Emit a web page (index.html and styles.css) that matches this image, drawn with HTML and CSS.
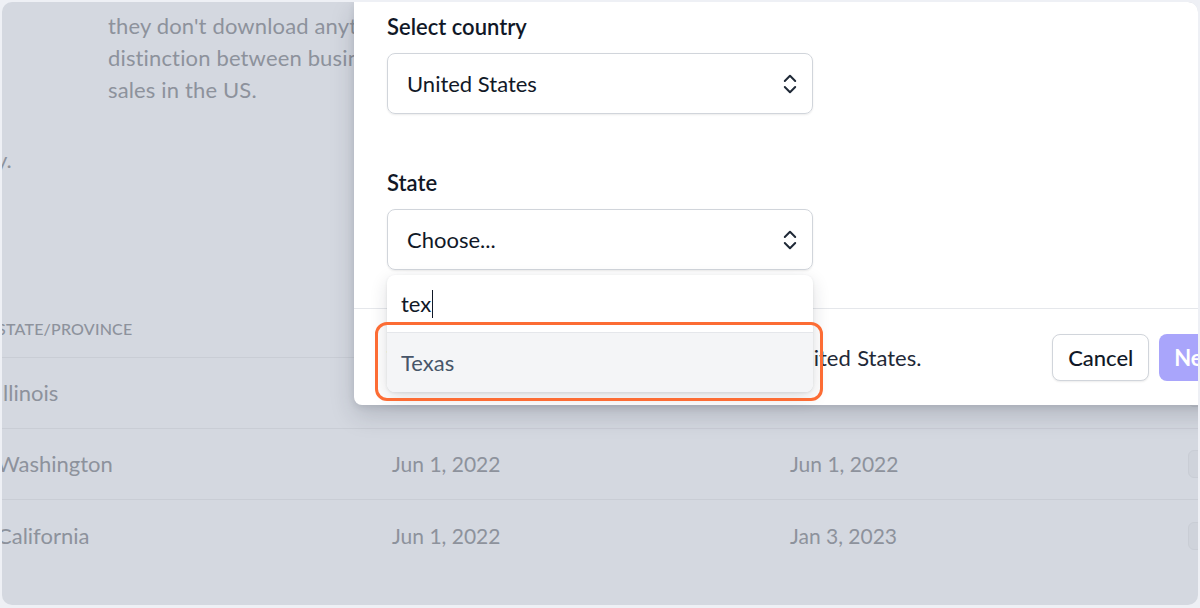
FILE: index.html
```html
<!DOCTYPE html>
<html lang="en">
<head>
<meta charset="utf-8">
<title>Select state</title>
<link rel="stylesheet" href="styles.css">
</head>
<body>
<div class="frame">
  <div class="page">
    <p class="intro">they don't download anything, so there is no<br>distinction between business and personal<br>sales in the US.</p>
    <p class="note">y.</p>
    <div class="table">
      <div class="row head">
        <div class="cell">State/Province</div>
        <div class="cell">Registered</div>
        <div class="cell">Effective</div>
        <div class="cell"></div>
      </div>
      <div class="row">
        <div class="cell">Illinois</div>
        <div class="cell date">Jun 1, 2022</div>
        <div class="cell date">Jun 1, 2022</div>
        <div class="cell"><span class="rowbtn"></span></div>
      </div>
      <div class="row">
        <div class="cell">Washington</div>
        <div class="cell date">Jun 1, 2022</div>
        <div class="cell date">Jun 1, 2022</div>
        <div class="cell"><span class="rowbtn"></span></div>
      </div>
      <div class="row">
        <div class="cell">California</div>
        <div class="cell date">Jun 1, 2022</div>
        <div class="cell date">Jan 3, 2023</div>
        <div class="cell"><span class="rowbtn"></span></div>
      </div>
    </div>
  </div>

  <div class="modal">
    <div class="modal-body">
      <label class="label">Select country</label>
      <div class="select">
        <span>United States</span>
        <svg class="chev" viewBox="0 0 14 22" width="14" height="22"><path d="M1.8 8 L7 2.8 L12.2 8 M1.8 14 L7 19.2 L12.2 14" fill="none" stroke="#1f2937" stroke-width="2" stroke-linecap="round" stroke-linejoin="round"/></svg>
      </div>
      <label class="label label-state">State</label>
      <div class="select">
        <span>Choose...</span>
        <svg class="chev" viewBox="0 0 14 22" width="14" height="22"><path d="M1.8 8 L7 2.8 L12.2 8 M1.8 14 L7 19.2 L12.2 14" fill="none" stroke="#1f2937" stroke-width="2" stroke-linecap="round" stroke-linejoin="round"/></svg>
      </div>
      <div class="dropdown">
        <div class="search"><span class="typed">tex</span></div>
        <div class="option">Texas</div>
      </div>
      <div class="ring"></div>
    </div>
    <div class="modal-footer">
      <p class="footnote">Tax will be collected on sales sent to the United States.</p>
      <button class="btn btn-cancel">Cancel</button>
      <button class="btn btn-next">Next</button>
    </div>
  </div>
</div>
</body>
</html>
```

FILE: styles.css
```css
* { box-sizing: border-box; }

html, body {
  margin: 0;
  padding: 0;
  background: #eef0f5;
  font-family: Lato, "Open Sans", Arial, sans-serif;
}

.frame {
  position: relative;
  margin: 2px;
  height: 603px;
  border-radius: 10px;
  overflow: hidden;
  background: #d4d8e0;
}

/* background page (dimmed) */
.page {
  color: #8d929c;
  font-size: 22px;
  line-height: 32px;
}

.intro {
  margin: 0;
  padding: 8px 0 0 106px;
  letter-spacing: 0.15px;
}

.note {
  margin: 38px 0 0 -6px;
}

.table {
  margin: 124px 0 0 -5px;
  width: 1260px;
}

.row {
  display: grid;
  grid-template-columns: 395px 398px 398px 80px;
  align-items: center;
  height: 71px;
  border-bottom: 1px solid #c9cdd5;
}

.row:last-child {
  border-bottom: none;
}

.row.head {
  height: 58px;
  font-size: 16px;
  text-transform: uppercase;
  letter-spacing: 0.2px;
  font-weight: 500;
}

.date {
  font-size: 21px;
}

.rowbtn {
  display: block;
  width: 60px;
  height: 28px;
  border-radius: 6px;
  background: #cfd3db;
  border: 1px solid #c9cdd5;
}

/* modal */
.modal {
  position: absolute;
  left: 352px;
  top: 0;
  width: 916px;
  background: #fff;
  border-radius: 0 0 8px 8px;
  box-shadow: 0 10px 25px rgba(30, 35, 50, 0.18), 0 2px 6px rgba(30, 35, 50, 0.10);
}

.modal-body {
  position: relative;
  padding: 13px 33px 38px;
  display: flex;
  flex-direction: column;
  align-items: flex-start;
}

.label {
  font-size: 22px;
  line-height: 24px;
  font-weight: 600;
  color: #111827;
  margin-bottom: 14px;
}

.label-state {
  margin-top: 57px;
}

.select {
  width: 426px;
  height: 61px;
  border: 1px solid #d1d5db;
  border-radius: 8px;
  box-shadow: 0 1px 2px rgba(0, 0, 0, 0.08);
  display: flex;
  align-items: center;
  justify-content: space-between;
  padding: 0 15px 0 19px;
  font-size: 22px;
  color: #111827;
}

.chev { display: block; }

.dropdown {
  position: absolute;
  left: 33px;
  top: 273px;
  width: 426px;
  background: #fff;
  border-radius: 8px;
  box-shadow: 0 6px 18px rgba(30, 35, 50, 0.14), 0 1px 3px rgba(30, 35, 50, 0.10);
  overflow: hidden;
  z-index: 2;
}

.search {
  height: 58px;
  padding: 15px 0 0 14px;
  font-size: 22px;
  line-height: 28px;
  color: #111827;
  border-bottom: 1px solid #e5e7eb;
}

.typed {
  display: inline-block;
  padding-right: 1px;
  border-right: 1.5px solid #111827;
}

.option {
  height: 59px;
  padding: 16px 0 0 14px;
  font-size: 22px;
  line-height: 28px;
  color: #475569;
  background: #f4f5f7;
}

.ring {
  position: absolute;
  left: 21px;
  top: 320px;
  width: 448px;
  height: 79px;
  border: 3.5px solid #fc6c34;
  border-radius: 12px;
  z-index: 3;
}

.modal-footer {
  height: 97px;
  border-top: 1px solid #e5e7eb;
  display: flex;
  align-items: center;
  padding: 0 33px;
  gap: 10px;
}

.footnote {
  flex: 1;
  margin: 0;
  font-size: 22px;
  word-spacing: 0.8px;
  color: #1f2937;
}

.btn {
  height: 47px;
  border-radius: 8px;
  font-family: inherit;
  font-size: 22px;
  padding: 0 15px;
}

.btn-cancel {
  width: 97px;
  background: #fff;
  border: 1px solid #d1d5db;
  color: #111827;
  font-weight: 500;
  box-shadow: 0 1px 2px rgba(0, 0, 0, 0.08);
}

.btn-next {
  background: #a9a5fb;
  border: none;
  color: #fff;
  font-weight: 700;
}
```
